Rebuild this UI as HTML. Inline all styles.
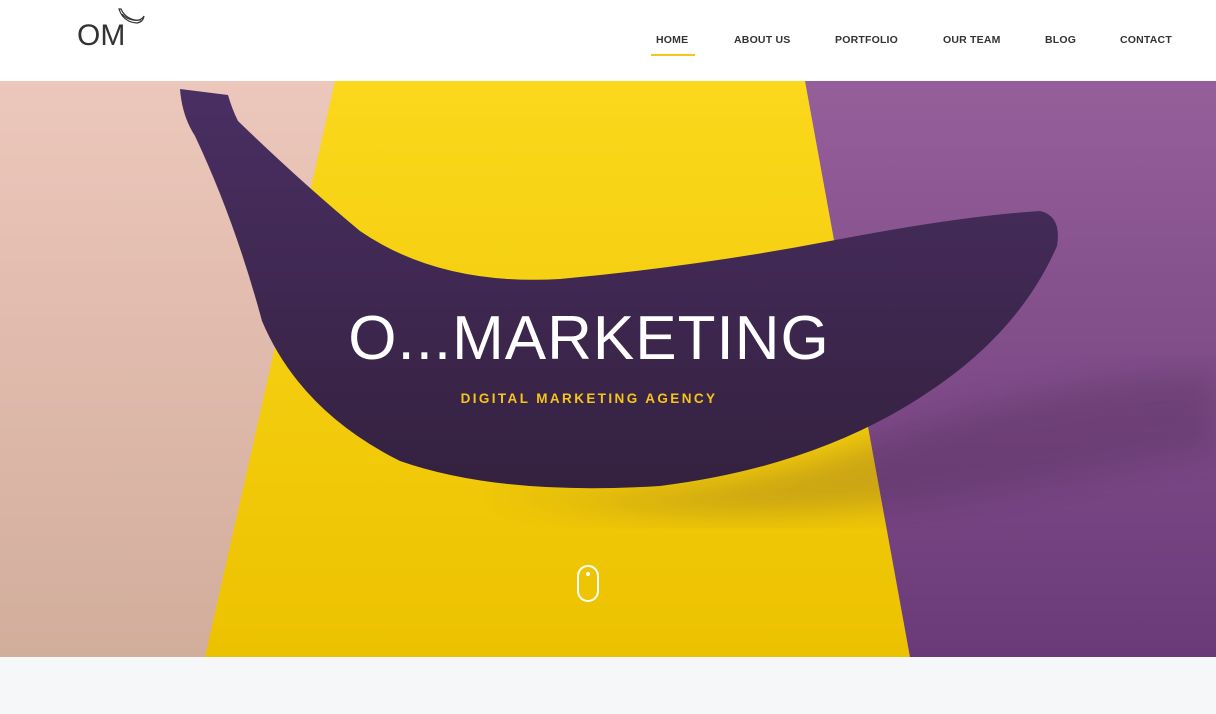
<!DOCTYPE html>
<html><head><style>
*{margin:0;padding:0;box-sizing:border-box}
body{width:1216px;height:714px;overflow:hidden;background:#f6f7f9;font-family:"Liberation Sans",sans-serif}
header{position:absolute;top:0;left:0;width:1216px;height:81px;background:#fff}
nav a{position:absolute;top:34px;font-size:10.5px;font-weight:bold;color:#333;letter-spacing:.2px;text-decoration:none}
.hero{position:absolute;top:81px;left:0;width:1216px;height:576px;overflow:hidden}
h1{position:absolute;top:222px;left:0;width:1178px;text-align:center;color:#fff;font-size:62px;font-weight:normal;letter-spacing:1px}
.sub{position:absolute;top:310px;left:0;width:1178px;text-align:center;color:#f5c518;font-size:13.5px;font-weight:bold;letter-spacing:2.4px}
</style></head><body>
<header>
<div style="position:absolute;left:77px;top:19px;font-size:30px;color:#333;letter-spacing:0px">OM</div>
<svg style="position:absolute;left:115px;top:6px" width="32" height="22" viewBox="0 0 32 22"><path d="M4 3 Q8 16 22 17 Q28 16 29 10 Q26 15 20 14 Q10 12 6 3 Z" fill="none" stroke="#333" stroke-width="1.2"/><path d="M7 8 Q14 16 26 14" fill="none" stroke="#333" stroke-width="1"/></svg>
<nav>
<a style="left:656px">HOME</a>
<div style="position:absolute;left:651px;top:54px;width:44px;height:1.5px;background:#f5c518"></div>
<a style="left:734px">ABOUT US</a>
<a style="left:835px">PORTFOLIO</a>
<a style="left:943px">OUR TEAM</a>
<a style="left:1045px">BLOG</a>
<a style="left:1120px">CONTACT</a>
</nav>
</header>
<div class="hero">
<svg width="1216" height="576" style="position:absolute;left:0;top:0">
<defs>
<linearGradient id="pk" x1="0" y1="0" x2="0" y2="1"><stop offset="0" stop-color="#ecc7bb"/><stop offset="1" stop-color="#d2ad9c"/></linearGradient>
<linearGradient id="yl" x1="0" y1="0" x2="0" y2="1"><stop offset="0" stop-color="#fbd81c"/><stop offset="1" stop-color="#ecc200"/></linearGradient>
<linearGradient id="pp" x1="0" y1="0" x2="0" y2="1"><stop offset="0" stop-color="#955f9a"/><stop offset="1" stop-color="#6a3a78"/></linearGradient>
<linearGradient id="bn" x1="0" y1="0" x2="0" y2="1"><stop offset="0" stop-color="#4a2f63"/><stop offset="1" stop-color="#34213f"/></linearGradient>
<filter id="b"><feGaussianBlur stdDeviation="14"/></filter>
</defs>
<rect width="1216" height="576" fill="url(#pk)"/>
<polygon points="335,0 805,0 910,576 205,576" fill="url(#yl)"/>
<polygon points="805,0 1216,0 1216,576 910,576" fill="url(#pp)"/>
<path d="M480 410 Q700 430 900 350 Q1100 290 1216 290 L1216 370 Q1100 390 950 420 Q700 450 480 410Z" fill="#3a1a40" opacity=".2" filter="url(#b)"/>
<path d="M180 8 L228 14 Q232 28 238 40 Q300 100 360 150 Q440 205 560 198 Q700 185 830 160 Q960 135 1040 130 Q1062 135 1057 165 Q1020 250 930 310 Q820 385 660 405 Q500 415 400 380 Q300 330 262 240 Q235 140 195 55 Q182 35 180 8Z" fill="url(#bn)"/>
</svg>
<h1>O...MARKETING</h1>
<div class="sub">DIGITAL MARKETING AGENCY</div>
<div style="position:absolute;left:577px;top:484px;width:22px;height:37px;border:2px solid #fff;border-radius:11px"></div>
<div style="position:absolute;left:586px;top:491px;width:4px;height:4px;background:#fff;border-radius:2px"></div>
</div>
</body></html>
